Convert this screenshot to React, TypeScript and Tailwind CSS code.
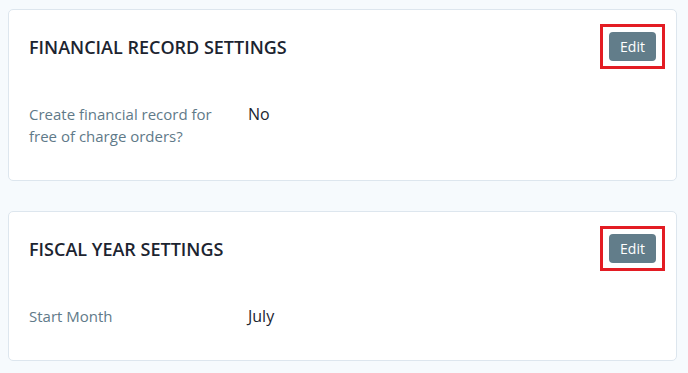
type Row = { label: string; value: string };

const SECTIONS: { title: string; rows: Row[] }[] = [
  {
    title: "FINANCIAL RECORD SETTINGS",
    rows: [{ label: "Create financial record for free of charge orders?", value: "No" }],
  },
  {
    title: "FISCAL YEAR SETTINGS",
    rows: [{ label: "Start Month", value: "July" }],
  },
];

function SettingsCard({ title, rows }: { title: string; rows: Row[] }) {
  return (
    <section className="rounded-[5px] border border-[#dde6ee] bg-white pl-5 pr-5 pt-[22px] pb-[33px]">
      {/* header */}
      <div className="flex h-[29px] items-center justify-between">
        <h2 className="text-[18px] font-semibold leading-none text-[#1c2430]">{title}</h2>
        <div className="relative">
          <button className="h-[29px] w-[47px] rounded-[4px] bg-[#627d8a] text-[14px] leading-none text-white">
            Edit
          </button>
          {/* highlight frame */}
          <div className="pointer-events-none absolute -left-[9px] -right-[9px] -top-[8px] -bottom-[8px] border-[3px] border-[#e31c23]" />
        </div>
      </div>

      {/* rows */}
      <div className="mt-[42px] space-y-4">
        {rows.map((r) => (
          <div key={r.label} className="grid grid-cols-[200px_1fr] gap-x-[19px]">
            <div className="text-[15px] leading-[22px] text-[#5f7a89]">{r.label}</div>
            <div className="text-[16px] leading-[22px] text-[#1c2430]">{r.value}</div>
          </div>
        ))}
      </div>
    </section>
  );
}

export default function App() {
  return (
    <div
      className="min-h-[373px] bg-[#f6fafd] pl-2 pt-[9px]"
      style={{ fontFamily: '"Open Sans", "Noto Sans", sans-serif' }}
    >
      <div className="flex w-[669px] flex-col gap-[30px]">
        {SECTIONS.map((s) => (
          <SettingsCard key={s.title} title={s.title} rows={s.rows} />
        ))}
      </div>
    </div>
  );
}
